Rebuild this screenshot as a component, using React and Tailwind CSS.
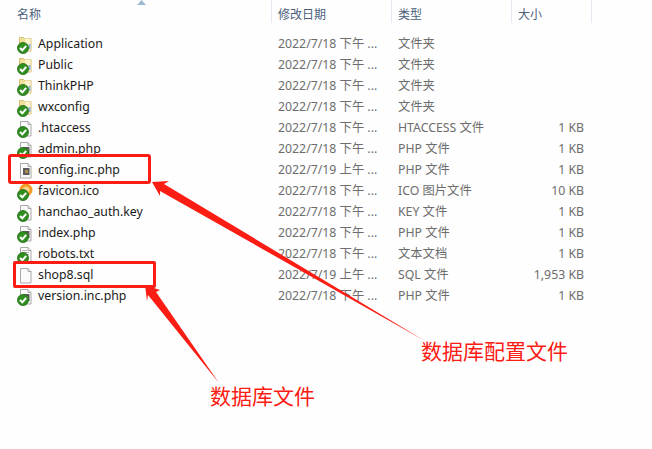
const FONT = 'font-["Noto_Sans","Noto_Sans_CJK_SC",sans-serif]';

const rows = [
  ["Application", "folder", true, "2022/7/18 下午 ...", "文件夹", ""],
  ["Public", "folder", true, "2022/7/18 下午 ...", "文件夹", ""],
  ["ThinkPHP", "folder", true, "2022/7/18 下午 ...", "文件夹", ""],
  ["wxconfig", "folder", true, "2022/7/18 下午 ...", "文件夹", ""],
  [".htaccess", "file", true, "2022/7/18 下午 ...", "HTACCESS 文件", "1 KB"],
  ["admin.php", "php", true, "2022/7/18 下午 ...", "PHP 文件", "1 KB"],
  ["config.inc.php", "php", false, "2022/7/19 上午 ...", "PHP 文件", "1 KB"],
  ["favicon.ico", "ico", true, "2022/7/18 下午 ...", "ICO 图片文件", "10 KB"],
  ["hanchao_auth.key", "file", true, "2022/7/18 下午 ...", "KEY 文件", "1 KB"],
  ["index.php", "php", true, "2022/7/18 下午 ...", "PHP 文件", "1 KB"],
  ["robots.txt", "txt", true, "2022/7/18 下午 ...", "文本文档", "1 KB"],
  ["shop8.sql", "file", false, "2022/7/19 上午 ...", "SQL 文件", "1,953 KB"],
  ["version.inc.php", "php", true, "2022/7/18 下午 ...", "PHP 文件", "1 KB"],
];

function FileIcon({ kind, check }) {
  return (
    <svg width="16" height="18" viewBox="0 0 16 18" className="shrink-0">
      {kind === "folder" && (
        <g>
          <path d="M2.500 1.500h4l1 1h6.500v12.500h-11.500z" fill="#efe09a" stroke="#d3bd70" strokeWidth="1" />
          <path d="M8 2.500h5.500v12H8z" fill="#fbf4cc" />
          <path d="M11.500 8h2v5h-2z" fill="#8ab4dc" />
        </g>
      )}
      {kind === "ico" && (
        <g>
          <circle cx="9" cy="7" r="6.500" fill="#f39a24" />
          <circle cx="9" cy="7" r="3.500" fill="#fbd48a" />
        </g>
      )}
      {kind !== "folder" && kind !== "ico" && (
        <g>
          <path d="M3.500 1.500h7.500l3 3v11.500h-10.500z" fill="#fbfbfb" stroke="#a8a8a8" strokeWidth="1" />
          <path d="M11 1.500v3h3" fill="#e8e8e8" stroke="#a8a8a8" strokeWidth="1" />
          {kind === "php" && <rect x="6" y="6" width="6.500" height="7" fill="#5c5c5c" />}
          {kind === "php" && <rect x="8" y="8" width="3" height="3" fill="#b08a50" />}
          {kind === "txt" && <path d="M5 4.500h5M5 6.500h7M5 8.500h7" stroke="#b8b8b8" strokeWidth="1" />}
        </g>
      )}
      {check && (
        <g>
          <circle cx="6" cy="12" r="5.500" fill="#2f8f1f" stroke="#1f6a14" strokeWidth="0.800" />
          <path d="M3 12l2.300 2.300L9.200 9.800" fill="none" stroke="#ffffff" strokeWidth="2" />
        </g>
      )}
    </svg>
  );
}

function Head({ label, w }) {
  return (
    <div className={`${w} h-[23px] border-r border-[#e3e9f1] pl-[6px] pt-[6px] flex items-center text-[12px] text-[#4c607a]`}>
      {label}
    </div>
  );
}

export default function App() {
  return (
    <div className={`relative w-[652px] h-[449px] overflow-hidden bg-[#fefefe] ${FONT}`}>
      <div className="flex">
        <div className="relative w-[272px] h-[23px] border-r border-[#e3e9f1] pl-[17px] pt-[6px] flex items-center text-[12px] text-[#4c607a]">
          名称
          <svg width="9" height="5" viewBox="0 0 9 5" className="absolute left-[137px] top-0">
            <path d="M4.500 0L9 5H0z" fill="#9db8d2" />
          </svg>
        </div>
        <Head label="修改日期" w="w-[120px]" />
        <Head label="类型" w="w-[120px]" />
        <Head label="大小" w="w-[80px]" />
      </div>
      <div className="mt-[11px] flex flex-col">
        {rows.map(([name, kind, check, date, type, size]) => (
          <div key={name} className="flex items-center h-[21px] text-[12.3px] leading-none">
            <div className="w-[272px] pl-[17px] flex items-center gap-[5px] text-[#1a1a1a]">
              <FileIcon kind={kind} check={check} />
              <span>{name}</span>
            </div>
            <div className="w-[120px] pl-[6px] text-[#6d6d6d] whitespace-nowrap">{date}</div>
            <div className="w-[120px] pl-[6px] text-[#6d6d6d]">{type}</div>
            <div className="w-[72px] text-right text-[#6d6d6d]">{size}</div>
          </div>
        ))}
      </div>

      <div className="absolute left-[8px] top-[154px] w-[143px] h-[30px] border-[3px] border-[#fb1c14] rounded-[3px]" />
      <div className="absolute left-[13px] top-[261px] w-[143px] h-[27px] border-[3px] border-[#fb1c14] rounded-[2px]" />

      <svg width="652" height="449" viewBox="0 0 652 449" className="absolute inset-0">
        <polygon points="152,182 169,181 164,184 425,341 160,191 160,196" fill="#fb1c14" />
        <polygon points="145,285 160,290 156,292 219,383 148,295 147,301" fill="#fb1c14" />
      </svg>

      <div className="absolute left-[421px] top-[337px] text-[21px] leading-[28px] text-[#fb1c14] whitespace-nowrap">数据库配置文件</div>
      <div className="absolute left-[210px] top-[382px] text-[21px] leading-[28px] text-[#fb1c14] whitespace-nowrap">数据库文件</div>
    </div>
  );
}
